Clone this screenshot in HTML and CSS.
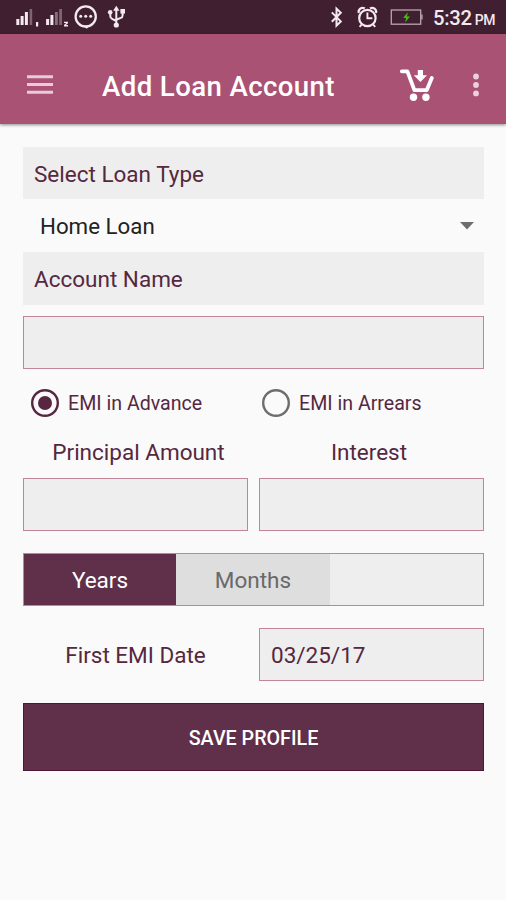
FILE: index.html
```
<!DOCTYPE html>
<html lang="en">
<head>
    <meta charset="UTF-8">
    <meta name="viewport" content="width=device-width, initial-scale=1.0">
    <title>Add Loan Account</title>
    <link rel="stylesheet" href="styles.css">
</head>
<body>
    <div class="status_bar">
        <svg class="status_left" width="130" height="34" viewBox="0 0 130 34">
            <!-- signal 1 -->
            <g fill="#f3e9ee">
                <rect x="16.3" y="19" width="3" height="6"/>
                <rect x="20.6" y="16" width="3" height="9"/>
                <rect x="24.9" y="12" width="3" height="13"/>
                <rect x="29.6" y="9" width="2.6" height="16" opacity=".35"/>
                <rect x="36" y="22" width="2.2" height="4.5"/>
            </g>
            <!-- signal 2 -->
            <g fill="#f3e9ee">
                <rect x="46.1" y="19" width="3" height="6"/>
                <rect x="50.4" y="15" width="3" height="10"/>
                <rect x="55" y="12" width="2.8" height="13" opacity=".4"/>
                <rect x="59.2" y="9" width="2.8" height="16" opacity=".35"/>
                <path d="M64 21.7h4v1.6l-2.2 1.6H68v1.6h-4v-1.4l2.2-2H64z"/>
            </g>
            <!-- chat -->
            <circle cx="85.7" cy="16.5" r="10.1" fill="none" stroke="#f3e9ee" stroke-width="2.3"/>
            <path d="M82.6 25.6l4.2 3.2 3-3.6z" fill="#f3e9ee"/>
            <g fill="#f3e9ee">
                <circle cx="80.7" cy="16.3" r="1.5"/>
                <circle cx="85.7" cy="16.3" r="1.5"/>
                <circle cx="90.7" cy="16.3" r="1.5"/>
            </g>
            <!-- usb -->
            <g fill="none" stroke="#f3e9ee" stroke-width="2">
                <path d="M116.3 10v14M110.3 13v3.2q0 1.8 1.8 2.6l4.2 2.2M122.6 13v2.5q0 1.8-1.8 2.4l-4.5 1.8"/>
            </g>
            <path d="M116.3 5.8l3.2 4.9h-6.4z" fill="#f3e9ee"/>
            <circle cx="116.3" cy="25" r="2.6" fill="#f3e9ee"/>
            <circle cx="110.2" cy="12.3" r="2.3" fill="#f3e9ee"/>
            <rect x="120.4" y="9" width="4.6" height="4.6" fill="#f3e9ee"/>
        </svg>
        <div class="status_right">
            <svg width="106" height="34" viewBox="0 0 106 34">
                <!-- bluetooth -->
                <path d="M1.8 12.4l9 9-4.3 4.3V8.6l4.3 4.2-9 9" fill="none" stroke="#f3e9ee" stroke-width="2"/>
                <!-- alarm -->
                <circle cx="37.4" cy="18" r="8.2" fill="none" stroke="#f3e9ee" stroke-width="2.2"/>
                <path d="M37.4 12.5v5.8h5M31.8 24.4l-2.2 2.4M43 24.4l2.2 2.4" fill="none" stroke="#f3e9ee" stroke-width="1.9"/>
                <path d="M28.8 13a4 4 0 0 1 6-4.5M46 13a4 4 0 0 0-6-4.5" fill="none" stroke="#f3e9ee" stroke-width="2.2"/>
                <!-- battery -->
                <rect x="61.3" y="10" width="29.4" height="14.2" fill="none" stroke="#b9a6b0" stroke-width="1.3"/>
                <rect x="91.2" y="14.5" width="1.4" height="5" fill="#b9a6b0"/>
                <path d="M77.8 12.2l-4.6 5.8h2.9l-1 4.6 4.9-6h-3z" fill="#3fbf0c"/>
            </svg>
            <span class="clock">5:32</span><span class="ampm">PM</span>
        </div>
    </div>

    <div class="app_bar">
        <svg class="menu_icon" width="27" height="22" viewBox="0 0 27 22">
            <path d="M0 2.7h26M0 10.6h26M0 18.2h26" stroke="#e9cbd8" stroke-width="3"/>
        </svg>
        <h1 class="title">Add Loan Account</h1>
        <svg class="cart_icon" width="36" height="34" viewBox="0 0 36 34">
            <path d="M3.8 3.3h5.6l7 18.8h12.4L33.8 10" fill="none" stroke="#fff" stroke-width="3.8" stroke-linecap="round" stroke-linejoin="round"/>
            <path d="M19.8 2H25v5.2h4L22.4 14l-6.6-6.8h4z" fill="#fff"/>
            <circle cx="15.5" cy="29.3" r="3.7" fill="#fff"/>
            <circle cx="27.9" cy="29.3" r="3.7" fill="#fff"/>
        </svg>
        <svg class="more_icon" width="8" height="24" viewBox="0 0 8 24">
            <g fill="#ecd0dc">
                <circle cx="4" cy="3.5" r="2.9"/>
                <circle cx="4" cy="12" r="2.9"/>
                <circle cx="4" cy="20.4" r="2.9"/>
            </g>
        </svg>
    </div>

    <form class="loan_form">
        <div class="section_label">Select Loan Type</div>
        <div class="spinner">
            <span>Home Loan</span>
            <svg width="14" height="8" viewBox="0 0 14 8"><path d="M0 0h14L7 7.5z" fill="#6e6e6e"/></svg>
        </div>
        <div class="section_label">Account Name</div>
        <input type="text" class="field" aria-label="Account Name">

        <div class="radios">
            <label class="radio">
                <svg width="28" height="28" viewBox="0 0 28 28">
                    <circle cx="14" cy="14" r="12.8" fill="none" stroke="#572641" stroke-width="2.4"/>
                    <circle cx="14" cy="14" r="7" fill="#572641"/>
                </svg>
                <span>EMI in Advance</span>
            </label>
            <label class="radio">
                <svg width="28" height="28" viewBox="0 0 28 28">
                    <circle cx="14" cy="14" r="12.8" fill="none" stroke="#6d6d6d" stroke-width="2.4"/>
                </svg>
                <span>EMI in Arrears</span>
            </label>
        </div>

        <div class="two_col captions">
            <span class="principal">Principal Amount</span>
            <span class="interest">Interest</span>
        </div>
        <div class="two_col">
            <input type="text" class="field" aria-label="Principal Amount">
            <input type="text" class="field" aria-label="Interest">
        </div>

        <div class="tenure">
            <div class="tab active">Years</div>
            <div class="tab">Months</div>
            <input type="text" class="tenure_value" aria-label="Tenure">
        </div>

        <div class="two_col date_row">
            <span>First EMI Date</span>
            <div class="field date">03/25/17</div>
        </div>

        <button type="button" class="save">SAVE PROFILE</button>
    </form>
</body>
</html>
```
FILE: styles.css
```
*{
    box-sizing:border-box;
}
body{
    margin:0;
    height:900px;
    background:#fafafa;
    color:#552840;
    font-family:Roboto, sans-serif;
    font-size:22.5px;
    overflow:hidden;
}
.status_bar{
    display:flex;
    justify-content:space-between;
    height:34px;
    background:#3f1f30;
    color:#f3e9ee;
}
.status_right{
    display:flex;
    align-items:baseline;
    width:176px;
}
.status_right svg{
    align-self:flex-start;
    margin-right:-3px;
}
.clock{
    font-size:20.3px;
    font-weight:500;
    line-height:37px;
    letter-spacing:-.3px;
}
.ampm{
    margin-left:3px;
    font-size:14px;
    font-weight:500;
    letter-spacing:-.3px;
}
.app_bar{
    display:flex;
    align-items:center;
    height:90px;
    padding:12px 26px 0 27px;
    background:#aa5273;
    box-shadow:0 1px 3px rgba(0,0,0,.45);
}
.title{
    flex:1;
    margin:2px 0 0 48px;
    color:#fff;
    font-size:27.6px;
    font-weight:500;
    letter-spacing:.4px;
    white-space:nowrap;
}
.cart_icon{
    margin-right:38px;
}
.loan_form{
    display:flex;
    flex-direction:column;
    margin:23px 22px 0 23px;
}
.section_label{
    height:52px;
    padding-left:11px;
    background:#eee;
    line-height:54px;
}
.section_label + .field{
    margin-top:11px;
}
.spinner{
    display:flex;
    align-items:center;
    justify-content:space-between;
    height:53px;
    padding:1px 10px 0 17px;
    color:#222;
}
.spinner span{
    font-size:22.3px;
}
.spinner + .section_label{
    height:53px;
}
.field{
    width:100%;
    height:53px;
    padding:0 11px;
    border:1px solid #c0849b;
    border-radius:0;
    background:#eee;
    color:#552840;
    font:inherit;
    outline:none;
}
.radios{
    display:flex;
    height:68px;
    padding-left:8px;
}
.radio{
    display:flex;
    flex:none;
    align-items:center;
    width:231px;
    font-size:19.6px;
}
.radio span{
    margin:1px 0 0 9px;
}
.radio + .radio{
    width:200px;
}
.two_col{
    display:grid;
    grid-template-columns:225px 225px;
    gap:11px;
}
.captions{
    height:41px;
    line-height:31px;
    text-align:center;
}
.captions .principal{
    padding-left:6px;
}
.captions .interest{
    padding-right:5px;
}
.tenure{
    display:flex;
    height:53px;
    margin-top:22px;
    border:1px solid #c0849b;
    background:#eee;
}
.tab{
    width:154px;
    background:#dedede;
    color:#696969;
    line-height:53px;
    text-align:center;
}
.tab.active{
    width:152px;
    background:#602f4a;
    color:#fff;
}
.tenure_value{
    flex:1;
    min-width:0;
    border:0;
    background:none;
    font:inherit;
}
.date_row{
    height:53px;
    margin-top:22px;
    line-height:55px;
    text-align:center;
}
.date{
    line-height:53px;
    text-align:left;
}
.save{
    height:68px;
    margin-top:22px;
    padding:2px 0 0;
    border:1px solid #4c1834;
    background:#602f4a;
    color:#fff;
    font-family:inherit;
    font-size:19.7px;
    font-weight:500;
}
```
